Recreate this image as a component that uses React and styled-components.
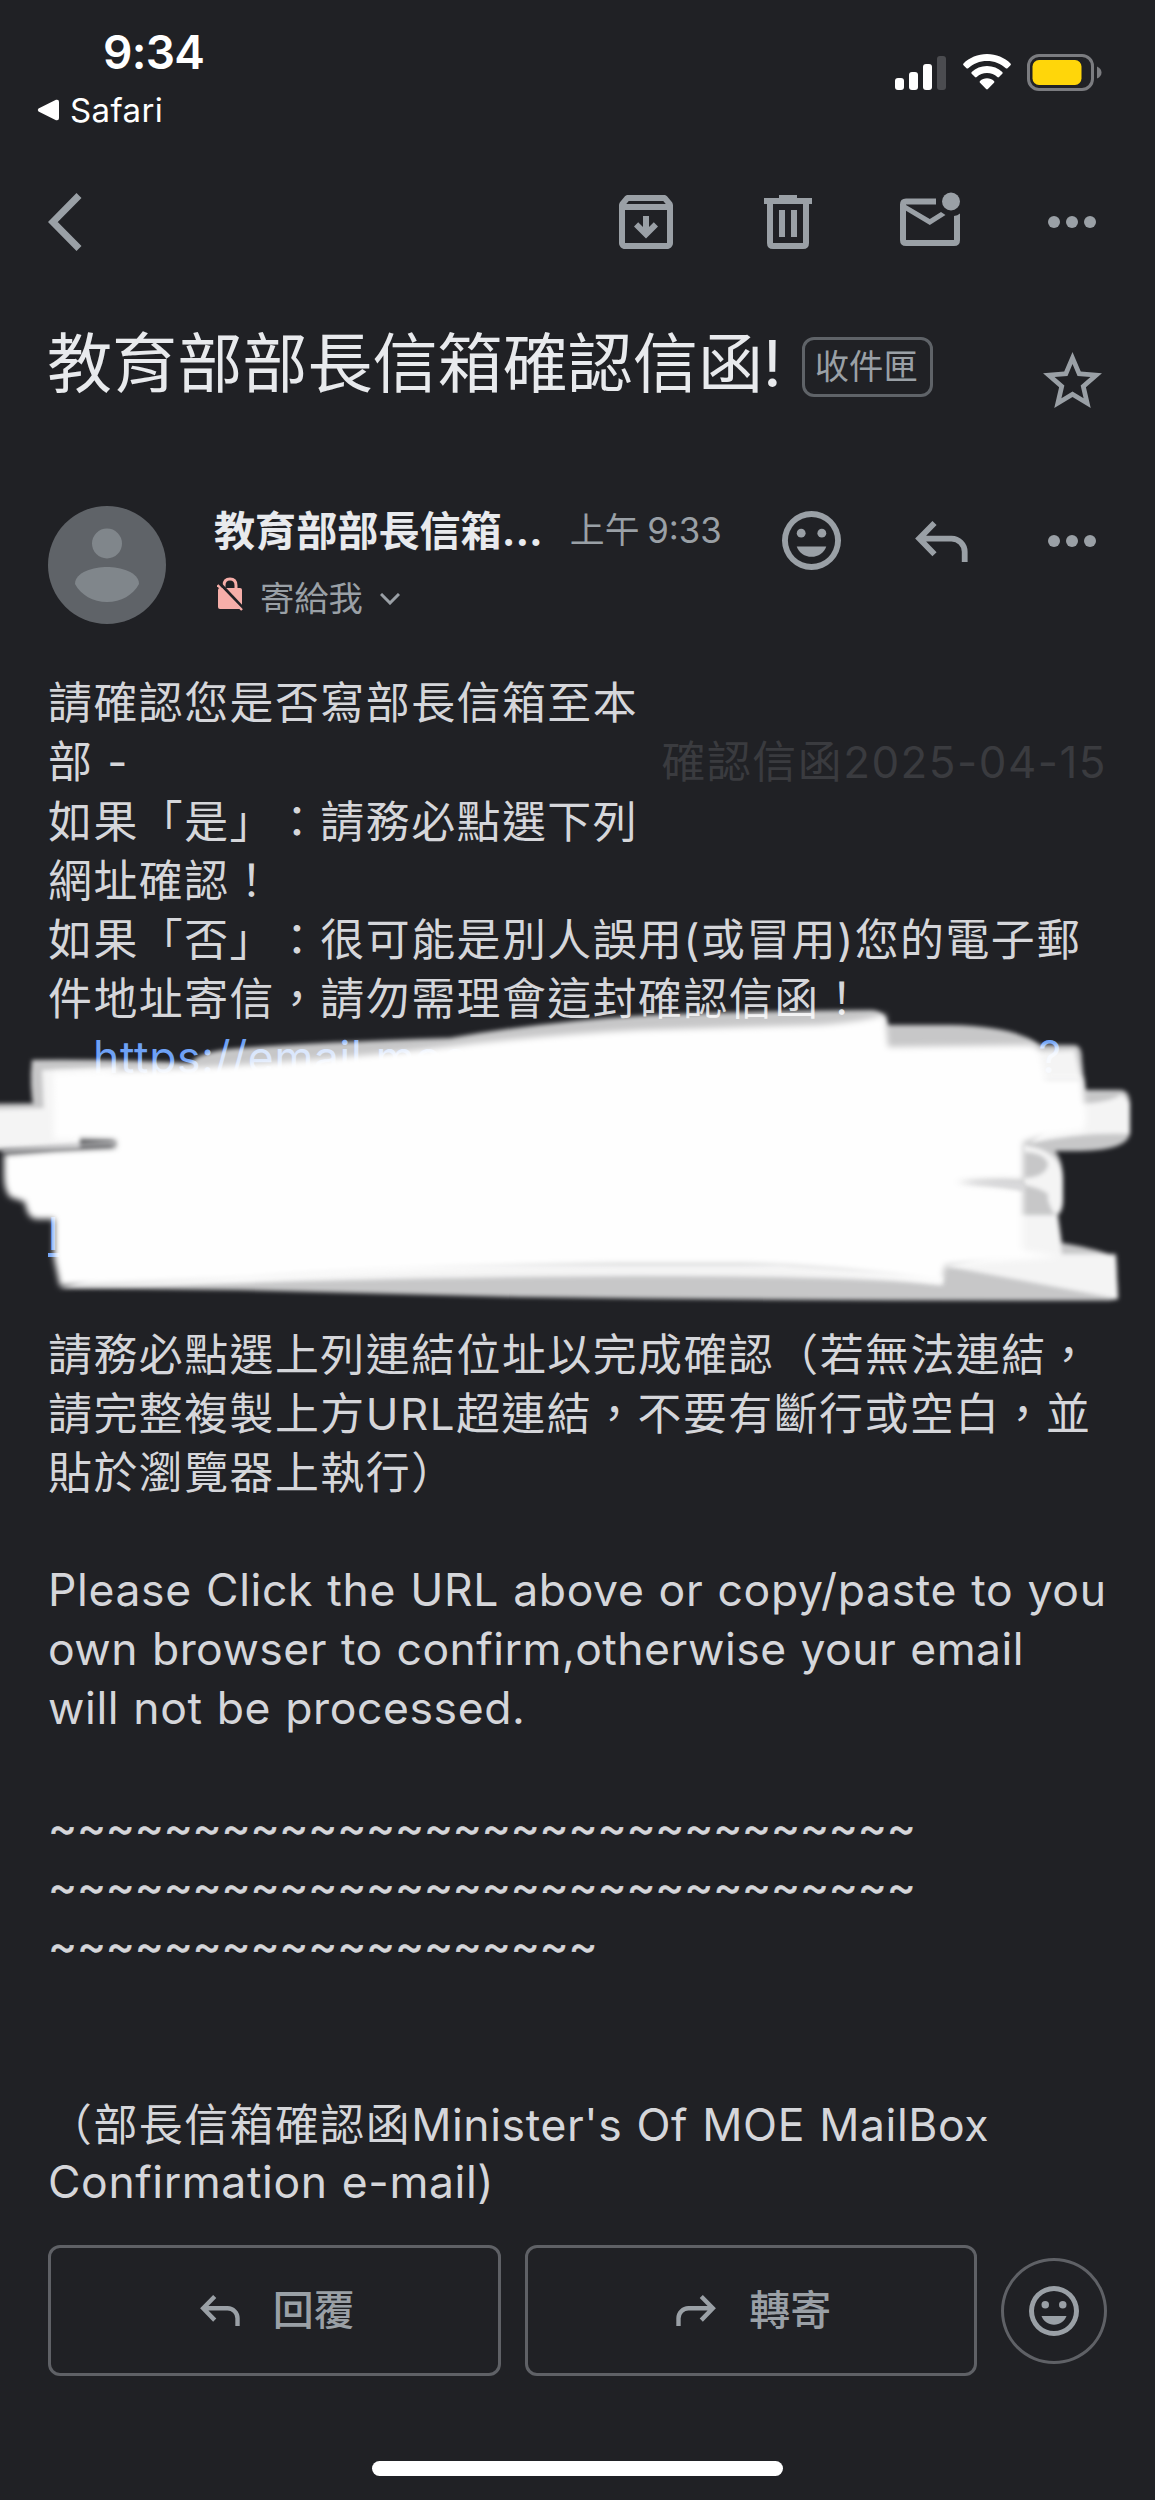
import React from "react";
import styled, { createGlobalStyle } from "styled-components";

const GlobalStyle = createGlobalStyle`
  * { box-sizing: border-box; }
  body {
    margin: 0;
    background: #202125;
    font-family: Inter, "Noto Sans CJK TC", sans-serif;
    text-spacing-trim: space-all;
  }
`;

const Screen = styled.div`
  display: flex;
  flex-direction: column;
  width: 1155px;
  height: 2500px;
  overflow: hidden;
  background: #202125;
`;

const StatusBar = styled.header`
  display: flex;
  justify-content: space-between;
  height: 160px;
  padding: 22px 53px 0 37px;
`;

const StatusLeft = styled.div`
  display: flex;
  flex-direction: column;
  color: #fff;
`;

const Clock = styled.div`
  margin-left: 66px;
  font-size: 46px;
  font-weight: 600;
  letter-spacing: -0.7px;
  line-height: 60px;
`;

const BackToApp = styled.div`
  display: flex;
  align-items: center;
  gap: 11px;
  font-size: 33px;
  letter-spacing: 0.4px;
  line-height: 40px;
  margin-top: 8px;
`;

const StatusIcons = styled.div`
  display: flex;
  gap: 16px;
  padding-top: 32px;
`;

const Toolbar = styled.nav`
  display: flex;
  align-items: center;
  height: 124px;
  padding: 0 59px 0 48px;
`;

const Spacer = styled.div`
  flex: 1;
`;

const Slot = styled.div`
  display: flex;
  margin-left: ${(p) => p.$gap || 0}px;
  margin-top: ${(p) => p.$top || 0}px;
`;

const SubjectRow = styled.section`
  display: flex;
  align-items: flex-start;
  height: 222px;
  padding: 34px 53px 0 47px;
`;

const Subject = styled.h1`
  margin: 0;
  font-size: 65.1px;
  font-weight: 400;
  line-height: 92px;
  color: #e8eaed;
  white-space: nowrap;
`;

const Label = styled.span`
  display: flex;
  align-items: center;
  justify-content: center;
  width: 131px;
  height: 60px;
  margin: 19px 0 0 20px;
  padding-right: 2px;
  border: 3px solid #5f6368;
  border-radius: 12px;
  color: #9aa0a6;
  font-size: 34.3px;
  line-height: 50px;
`;

const SenderRow = styled.section`
  display: flex;
  align-items: flex-start;
  height: 167px;
  padding-left: 48px;
  padding-right: 59px;
`;

const SenderInfo = styled.div`
  margin-left: 48px;
`;

const SenderLine = styled.div`
  display: flex;
  align-items: center;
  height: 44px;
  white-space: nowrap;
`;

const Sender = styled.span`
  font-size: 41.1px;
  font-weight: 700;
  color: #e8eaed;
`;

const Time = styled.span`
  margin-left: 27px;
  font-size: 34.8px;
  word-spacing: -2px;
  color: #9aa0a6;
`;

const Recipient = styled.div`
  display: flex;
  align-items: center;
  gap: 17px;
  height: 60px;
  margin-top: 16px;
  padding-left: 3px;
  color: #9aa0a6;
  font-size: 34.3px;
`;

const Message = styled.main`
  position: relative;
  height: 1572px;
  padding: 1px 48px 0;
  color: #d5d6da;
  font-size: 43.9px;
  letter-spacing: 1.5px;
`;

const Line = styled.div`
  display: flex;
  justify-content: space-between;
  height: 59.25px;
  line-height: 59.25px;
  white-space: pre;
`;

const Faded = styled.span`
  color: #3a3b3f;
`;

const Latin = styled.span`
  margin-top: -2px;
  font-size: 44.5px;
  letter-spacing: ${(p) => p.$spacing || 0.6}px;
  word-spacing: 1px;
`;

const Link = styled(Latin)`
  color: #6ea1f5;
  text-decoration: ${(p) => (p.$underline ? "underline" : "none")};
`;

const Tildes = styled.span`
  margin-top: -2px;
  letter-spacing: -0.12px;
  -webkit-text-stroke: 0.5px #d5d6da;
`;

const ScribbleSvg = styled.svg`
  position: absolute;
  left: 0;
  top: 327px;
`;

const Actions = styled.footer`
  display: flex;
  align-items: center;
  gap: 24px;
  height: 131px;
  padding: 0 48px;
`;

const ActionButton = styled.button`
  display: flex;
  align-items: center;
  justify-content: center;
  gap: 33px;
  width: 453px;
  height: 131px;
  padding: 0 0 0 6px;
  border: 3px solid #5f6166;
  border-radius: 12px;
  background: none;
  color: #9aa0a6;
  font: 500 41px Inter, "Noto Sans CJK TC", sans-serif;
`;

const ActionText = styled.span`
  padding-bottom: 8px;
`;

const RoundButton = styled.button`
  display: flex;
  align-items: center;
  justify-content: center;
  width: 106px;
  height: 106px;
  padding: 0;
  border: 3px solid #5f6166;
  border-radius: 50%;
  background: none;
`;

const HomeBar = styled.div`
  width: 411px;
  height: 15px;
  margin: 85px auto 0;
  border-radius: 8px;
  background: #fff;
`;

const GREY = "#9aa0a6";

const Dots = () => (
  <svg width="48" height="12" viewBox="0 0 48 12" fill={GREY}>
    <circle cx="6" cy="6" r="6" />
    <circle cx="24" cy="6" r="6" />
    <circle cx="42" cy="6" r="6" />
  </svg>
);

const Smiley = ({ size }) => (
  <svg width={size} height={size} viewBox="2 2 20 20" fill={GREY}>
    <path d="M12 2a10 10 0 1 0 0 20 10 10 0 0 0 0-20zm0 18a8 8 0 1 1 0-16 8 8 0 0 1 0 16z" />
    <circle cx="8.5" cy="9.5" r="1.5" />
    <circle cx="15.5" cy="9.5" r="1.5" />
    <path d="M12 17.500c2.330 0 4.300-1.460 5-3.500H7c.7 2.040 2.670 3.500 5 3.500z" />
  </svg>
);

const ReplyArrow = ({ width, flip }) => (
  <svg
    width={width}
    height={width * 0.78}
    viewBox="0 0 53 41.3"
    fill="none"
    stroke={GREY}
    strokeWidth="5.8"
    transform={flip ? "scale(-1 1)" : undefined}
  >
    <path d="M19.500 2 4.200 17.600 19.500 33.300M4 17.600H36.500A13.200 13.200 0 0 1 49.700 30.800V41.300" />
  </svg>
);

// marker strokes drawn over the link: translucent edges first, solid middle last
const Scribble = () => (
  <ScribbleSvg width="1155" height="310" viewBox="0 1000 1155 310">
    <defs>
      <filter id="soft" x="-2%" y="-5%" width="104%" height="110%">
        <feGaussianBlur stdDeviation="2" />
      </filter>
      <filter id="softer" x="-2%" y="-5%" width="104%" height="110%">
        <feGaussianBlur stdDeviation="3" />
      </filter>
    </defs>
    <g fill="#fff" filter="url(#soft)">
      <g opacity=".75">
        <path d="M188 1068Q192 1053 230 1049Q300 1043 450 1038Q540 1022 650 1015Q760 1011 872 1010Q886 1011 887 1025H950Q1015 1026 1040 1045H1074Q1082 1045 1082 1060L1085 1090H1120Q1130 1090 1130 1105V1132Q1130 1150 1080 1151H1055Q1063 1160 1063 1180V1200Q1063 1212 1058 1215L1062 1243Q1105 1250 1116 1258L1118 1299L1110 1300.500Q820 1301 520 1297L240 1290L60 1288L200 1240Z" />
        <path d="M32 1060Q120 1059 200 1064L240 1110H34Q29 1085 32 1060Z" />
        <path d="M-20 1104L80 1103V1148L-20 1151Z" />
      </g>
      <g opacity=".8">
        <path d="M42 1070L120 1067L70 1115H44Z" />
        <path d="M-20 1110L80 1107V1146L-20 1148Z" />
        <path d="M1030 1052L1075 1050L1081 1080H1030Z" />
        <path d="M1075 1104Q1110 1103 1122 1094L1130 1103V1134Q1080 1132 1030 1143Z" />
        <path d="M1024 1145Q1062 1150 1063 1180V1200Q1062 1213 1054 1214Q1046 1200 1048 1194Q1040 1188 1024 1185V1178Q1046 1177 1048 1164Q1045 1153 1024 1152Z" />
        <path d="M1018 1215H1057L1062 1254H1116L1118 1299L1108 1297L945 1266L1018 1250Z" />
        <path d="M400 1265H780L943 1276V1285Q850 1276 635 1276Q400 1277 66 1288Z" />
      </g>
    </g>
    <g fill="#fefefe" filter="url(#softer)">
      <path d="M53 1073L190 1068Q330 1060 445 1047Q540 1035 640 1030L820 1025Q870 1021 885 1014L888 1047L1030 1045Q1040 1046 1041 1060L1045 1078H1082L1086 1118Q1086 1130 1080 1131Q1040 1135 1023 1142V1180Q990 1178 955 1182Q1000 1186 1023 1188V1250L1060 1257L945 1265L941 1283Q840 1266 740 1264H620Q400 1268 240 1280L60 1286L54 1258V1219H36Q27 1218 25 1202L10 1197Q4 1190 4 1175V1154Q60 1149 115 1147V1141L54 1139Z" />
    </g>
    <g filter="url(#soft)">
      <path d="M960 1183Q1000 1180 1024 1183V1191Q1000 1184 960 1183Z" fill="#d9d9db" />
      <path d="M2 1151Q70 1145 115 1143" fill="none" stroke="#c4c4c6" strokeWidth="3" />
    </g>
  </ScribbleSvg>
);

const lines = [
  "請確認您是否寫部長信箱至本",
  null,
  "如果「是」：請務必點選下列",
  "網址確認！",
  "如果「否」：很可能是別人誤用(或冒用)您的電子郵",
  "件地址寄信，請勿需理會這封確認信函！",
];

const notes = [
  "請務必點選上列連結位址以完成確認（若無法連結，",
  "請完整複製上方URL超連結，不要有斷行或空白，並",
  "貼於瀏覽器上執行）",
];

const english = [
  { text: "Please Click the URL above or copy/paste to you", spacing: 0.64 },
  { text: "own browser to confirm,otherwise your email", spacing: 0.46 },
  { text: "will not be processed.", spacing: 0.6 },
];

const App = () => {
  return (
    <>
      <GlobalStyle />
      <Screen>
        <StatusBar>
          <StatusLeft>
            <Clock>9:34</Clock>
            <BackToApp>
              <svg width="22" height="22" viewBox="0 0 22 22" fill="#fff">
                <path d="M1.500 9.500 19 .8Q22 0 22 3V19Q22 22 19 21.200L1.500 12.500Q0 11 1.500 9.500Z" />
              </svg>
              Safari
            </BackToApp>
          </StatusLeft>
          <StatusIcons>
            <svg width="52" height="36" viewBox="0 0 52 36" fill="#fff">
              <rect x="0" y="24" width="9" height="12" rx="3" />
              <rect x="14" y="18" width="9" height="18" rx="3" />
              <rect x="28" y="10" width="9" height="26" rx="3" />
              <rect x="42" y="2" width="9" height="34" rx="3" fill="#4b4c50" />
            </svg>
            <svg width="48" height="36" viewBox="0 0 48 36" fill="#fff">
              <path d="M24 0C14.800 0 6.400 3.600.5 9.400q-.8.9 0 1.800l3 3q.8.8 1.700 0C10 9.600 16.700 6.900 24 6.900s14 2.700 18.800 7.300q.9.8 1.700 0l3-3q.8-.9 0-1.800C41.600 3.600 33.200 0 24 0z" />
              <path d="M24 12c-5.900 0-11.300 2.200-15.300 6q-.9.900 0 1.800l3.300 3.200q.8.8 1.700 0c2.700-2.500 6.300-4 10.300-4s7.600 1.500 10.300 4q.9.8 1.700 0l3.300-3.200q.9-.9 0-1.800c-4-3.800-9.400-6-15.300-6z" />
              <path d="M24 24.300c-2.700 0-5.100 1-7 2.600q-.9.9 0 1.800l6.100 6.300q.9.900 1.800 0l6.100-6.300q.9-.9 0-1.800c-1.900-1.600-4.300-2.600-7-2.600z" />
            </svg>
            <svg width="75" height="37" viewBox="0 0 75 37">
              <rect x="1.500" y="1.500" width="64" height="34" rx="10.500" fill="none" stroke="#7b7c80" strokeWidth="3" />
              <rect x="5.500" y="6" width="49" height="25" rx="6.500" fill="#ffd60a" />
              <path d="M70 12.500q4.500 2 4.500 6t-4.500 6z" fill="#7b7c80" />
            </svg>
          </StatusIcons>
        </StatusBar>

        <Toolbar>
          <svg width="34" height="58" viewBox="0 0 34 58" fill="none" stroke={GREY} strokeWidth="7">
            <path d="M31 2.500 4.800 29 31 55.500" />
          </svg>
          <Spacer />
          <svg width="54" height="54" viewBox="3 3 18 18" fill={GREY}>
            <path d="m20.540 5.230-1.390-1.680C18.880 3.210 18.470 3 18 3H6c-.47 0-.88.21-1.160.55L3.460 5.230C3.170 5.570 3 6.020 3 6.500V19c0 1.100.9 2 2 2h14c1.100 0 2-.9 2-2V6.500c0-.48-.17-.93-.46-1.270zM6.240 5h11.520l.83 1H5.420l.82-1zM5 19V8h14v11H5zm11-5.500-4 4-4-4 1.400-1.400 1.600 1.600V10h2v3.700l1.600-1.600z" />
          </svg>
          <Slot $gap={91}>
            <svg width="48" height="54" viewBox="0 0 48 54" fill={GREY}>
              <path d="M15 0H33V3H48V9H45V48Q45 54 39 54H9Q3 54 3 48V9H0V3H15ZM9 9V48H39V9ZM15 15H21V42H15ZM27 15H33V42H27Z" fillRule="evenodd" />
            </svg>
          </Slot>
          <Slot $gap={88}>
            <svg width="60" height="60" viewBox="0 0 60 60" fill={GREY}>
              <path d="M36 6.500H6Q0 6.500 0 12.500V48Q0 54 6 54H54Q60 54 60 48V21.500Q57.500 23.500 54 24V48H6V18.700L29.800 33 45.500 23 41 20 29.800 27 6 13V12.500H36Z" />
              <circle cx="51" cy="9.500" r="9" />
            </svg>
          </Slot>
          <Slot $gap={88}>
            <Dots />
          </Slot>
        </Toolbar>

        <SubjectRow>
          <Subject>教育部部長信箱確認信函!</Subject>
          <Label>收件匣</Label>
          <Spacer />
          <Slot $top={34}>
            <svg width="59" height="56" viewBox="2 2 20 19" fill={GREY}>
              <path d="m22 9.240-7.190-.62L12 2 9.190 8.630 2 9.240l5.460 4.730L5.820 21 12 17.270 18.180 21l-1.630-7.030L22 9.240zM12 15.400l-3.760 2.270 1-4.280-3.320-2.880 4.380-.38L12 6.100l1.710 4.040 4.380.38-3.320 2.880 1 4.280L12 15.400z" />
            </svg>
          </Slot>
        </SubjectRow>

        <SenderRow>
          <svg width="118" height="118" viewBox="0 0 118 118">
            <circle cx="59" cy="59" r="59" fill="#5f6368" />
            <circle cx="59" cy="37.500" r="15" fill="#80868b" />
            <path d="M27 78C27 66 46 61 59 61S91 66 91 78C85 89 73 96 59 96S33 89 27 78Z" fill="#80868b" />
          </svg>
          <SenderInfo>
            <SenderLine>
              <Sender>教育部部長信箱...</Sender>
              <Time>上午 9:33</Time>
            </SenderLine>
            <Recipient>
              <Slot $top={-5}>
                <svg width="26" height="34" viewBox="0 0 26 34">
                  <path d="M7 12V8.500Q7 2 13 2T19 8.500V12" fill="none" stroke="#f6aea9" strokeWidth="3" />
                  <path d="M3 11H23Q25 11 25 13V30Q25 32 23 32H3Q1 32 1 30V13Q1 11 3 11Z" fill="#f6aea9" />
                  <path d="M2 5.500 26 31" stroke="#202125" strokeWidth="3" />
                  <path d="M.5 8 25 33" stroke="#f6aea9" strokeWidth="2.500" />
                </svg>
              </Slot>
              寄給我
              <Slot $top={6}>
                <svg width="20" height="12" viewBox="0 0 20 12" fill="none" stroke={GREY} strokeWidth="3">
                  <path d="M1 1 10 10 19 1" />
                </svg>
              </Slot>
            </Recipient>
          </SenderInfo>
          <Spacer />
          <Slot $top={5}>
            <Smiley size={59} />
          </Slot>
          <Slot $gap={74} $top={15}>
            <ReplyArrow width={53} />
          </Slot>
          <Slot $gap={80} $top={29}>
            <Dots />
          </Slot>
        </SenderRow>

        <Message>
          {lines.map((text, i) =>
            text ? (
              <Line key={i}>{text}</Line>
            ) : (
              <Line key={i}>
                <span>部 -</span>
                <Faded>確認信函2025-04-15</Faded>
              </Line>
            )
          )}
          <Line>
            <Link>　https://email.moe</Link>
            <Link>?　</Link>
          </Line>
          <Line />
          <Line />
          <Line>
            <Link $underline>l</Link>
          </Line>
          <Line />
          {notes.map((text) => (
            <Line key={text}>{text}</Line>
          ))}
          <Line />
          {english.map(({ text, spacing }) => (
            <Line key={text}>
              <Latin $spacing={spacing}>{text}</Latin>
            </Line>
          ))}
          <Line />
          {[30, 30, 19].map((count, i) => (
            <Line key={i}>
              <Tildes>{"~".repeat(count)}</Tildes>
            </Line>
          ))}
          <Line />
          <Line />
          <Line>
            <span>
              （部長信箱確認函<Latin>Minister's Of MOE MailBox</Latin>
            </span>
          </Line>
          <Line>
            <Latin>Confirmation e-mail)</Latin>
          </Line>
          <Scribble />
        </Message>

        <Actions>
          <ActionButton>
            <ReplyArrow width={40} />
            <ActionText>回覆</ActionText>
          </ActionButton>
          <ActionButton>
            <ReplyArrow width={40} flip />
            <ActionText>轉寄</ActionText>
          </ActionButton>
          <RoundButton>
            <Smiley size={50} />
          </RoundButton>
        </Actions>
        <HomeBar />
      </Screen>
    </>
  );
};

export default App;
